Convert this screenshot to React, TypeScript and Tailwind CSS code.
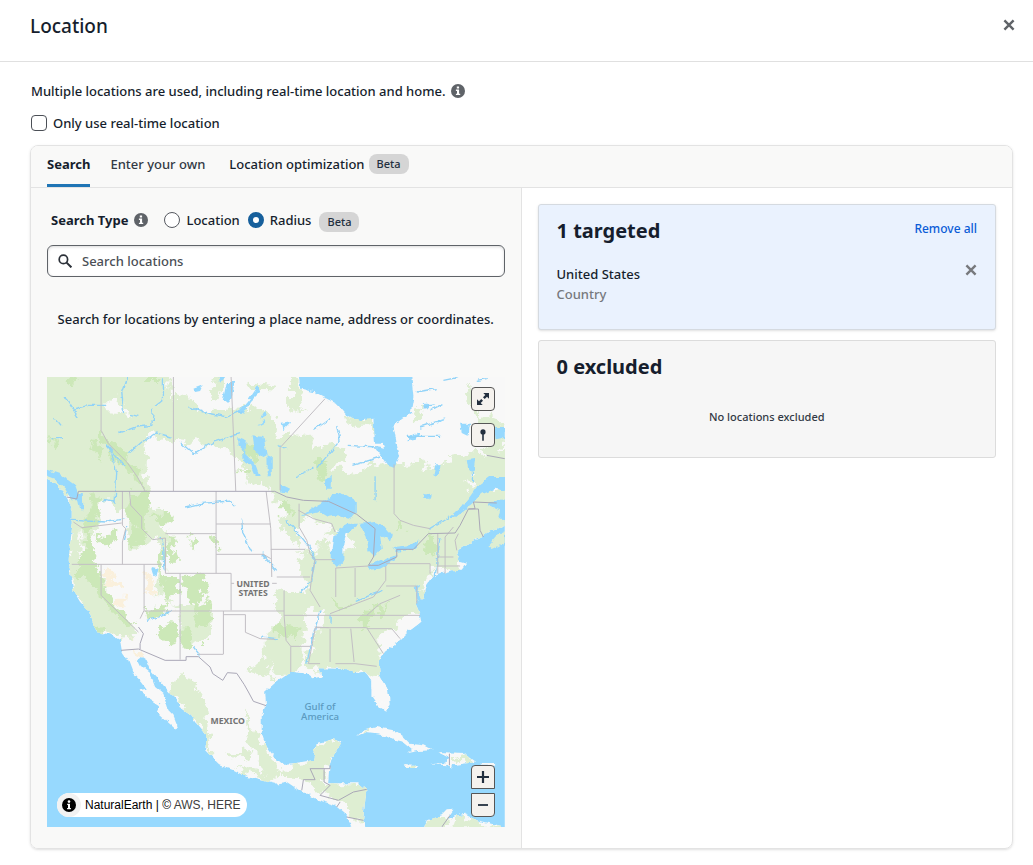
import { useState } from "react";
import type { ReactNode } from "react";

function CloseIcon() {
  return (
    <svg viewBox="0 0 12 12" className="size-3" aria-hidden="true">
      <path d="M1.4 1.4 10.6 10.6M10.6 1.4 1.4 10.6" stroke="currentColor" strokeWidth="2.4" />
    </svg>
  );
}

function InfoIcon({ className }: { className: string }) {
  return (
    <svg viewBox="0 0 14 14" className={className} aria-hidden="true">
      <circle cx="7" cy="7" r="7" fill="currentColor" />
      <path d="M5.8 2.4h2.3v2H5.8zM4.9 5.5h3.2v4.2h1.1v1.4H4.9V9.7H6V6.9H4.9z" fill="#fff" />
    </svg>
  );
}

function Beta() {
  return (
    <span className="inline-flex h-5 items-center rounded-lg bg-[#d5d5d5] px-2 text-[11px] leading-4 font-medium text-[#232f3e]">
      Beta
    </span>
  );
}

function MapButton({ label, shape, children }: { label: string; shape: string; children: ReactNode }) {
  return (
    <button
      type="button"
      aria-label={label}
      className={`flex size-6 items-center justify-center border border-[#565656] bg-[#f5f2ee] text-[#232f3e] ${shape}`}
    >
      {children}
    </button>
  );
}

function NorthAmericaMap() {
  return (
    <svg
      viewBox="0 0 1374 1350"
      preserveAspectRatio="xMidYMid slice"
      className="block h-full w-full"
      role="img"
      aria-label="Map of North America"
    >
      <defs>
        <filter id="coast" x="0" y="0" width="1374" height="1350" filterUnits="userSpaceOnUse">
          <feTurbulence type="fractalNoise" baseFrequency="0.045" numOctaves="3" seed="4" />
          <feDisplacementMap in="SourceGraphic" scale="16" xChannelSelector="R" yChannelSelector="G" />
        </filter>
        <filter id="forest" x="-40" y="-40" width="1460" height="1430" filterUnits="userSpaceOnUse">
          <feTurbulence type="fractalNoise" baseFrequency="0.03" numOctaves="4" seed="9" />
          <feDisplacementMap in="SourceGraphic" scale="56" xChannelSelector="R" yChannelSelector="G" />
        </filter>
        <clipPath id="land">
          <path d={LAND} />
          <path d={ISLANDS} />
        </clipPath>
      </defs>
      <rect width="1374" height="1350" fill="#97d9fe" />

      <g filter="url(#coast)">
        <path d={LAND} fill="#f8f8f8" />
        <path d={ISLANDS} fill="#f8f8f8" />
        <g clipPath="url(#land)">
          <g filter="url(#forest)" fill="#deeed2">
            <path d="M-40-40H365L370 60 395 80 410 110 570 95 650 90 690 150 690 345 640 320 600 300 570 245 530 210 390 195 335 170 290 185 300 250 300 300 320 380 350 410 360 470 350 540 345 675 390 690 480 670 500 720 480 780 410 810 395 790 400 700 350 640 320 660 345 560 335 480 310 500 255 520 235 400 165 370 160 450 130 490 135 560 170 600 190 670 240 720 270 770 250 790 210 780 180 770 130 740 110 700 60 560 70 350 -40 330Z" />
            <path d="M380 50 430 60 450 110 380 120ZM495 0 530 0 515 75 490 70ZM600 10 690 20 690 45 610 35ZM730-10 750-10 770 105 730 100Z" />
            <path d="M684 190 735 175 790 180 800 215 845 205 900 215 905 250 850 270 900 285 970 265 1030 260 1060 265 1120 260 1160 275 1220 235 1310 230 1380 220 1400 300 1310 340 1400 335V480L1290 490 1240 520 1235 580 1160 570 1130 630 1145 690 1070 760 1020 800 1000 900 940 885 760 870 730 890 684 890 650 830 660 770 690 750 684 640 755 655 790 640 740 540 780 530 810 520 850 450 780 420 750 460 760 520 690 430 720 400 684 350Z" />
            <path d="M891 110 985 125 980 165 950 140 895 140ZM1095 130 1115 80 1130 100 1105 140ZM1270 20 1290 100 1374 140 1374 200 1320 250 1320 180 1255 60Z" />
            <path d="M405 875 440 920 470 970 482 1050 500 1130 480 1120 470 1050 440 1030 390 960 375 915ZM590 995 615 1030 640 1085 660 1120 690 1170 684 1220 600 1190 560 1170 660 1190 640 1140 600 1100 610 1060ZM540 1130 610 1125 615 1145 550 1140ZM600 885 640 850 655 830 680 900 620 890Z" />
            <path d="M805 1100 890 1085 860 1160 830 1175 840 1220 940 1215 965 1240 955 1340 930 1330 900 1290 830 1250 790 1220 700 1200 684 1180 770 1165ZM1210 1130 1290 1150 1275 1170 1210 1150ZM1070 1160 1110 1160 1100 1175 1070 1165ZM1140 1320 1210 1315 1200 1350 1140 1350ZM1225 1320 1374 1345 1374 1360 1220 1360ZM940 1060 970 1055 960 1075Z" />
            <path d="M880 460 930 450 965 520 900 530 880 500Z" />
          </g>
          <g filter="url(#forest)" fill="#cce8b8">
            <path d="M155 160 200 190 240 235 280 290 285 340 250 290 200 235 160 190ZM135 195 170 220 165 245 140 215ZM0 180 40 200 35 220 10 205ZM60 0 90 10 80 30 60 20ZM295 0 345 0 340 12 295 12Z" />
            <path d="M130 350 160 360 150 430 125 460 140 510 155 570 180 640 200 670 240 720 270 740 235 745 190 700 140 620 90 600 100 540 115 500 105 450 125 430Z" />
            <path d="M245 350 310 350 320 390 290 420 300 470 285 510 255 510 260 450 240 420ZM310 410 375 410 370 445 330 440ZM360 475 400 480 380 510 395 545 370 545 355 520ZM145 485 210 450 205 480 180 510ZM495 475 520 490 525 520 500 510ZM430 470 450 490 440 510 425 490Z" />
            <path d="M345 500 355 560 350 600 385 600 395 640 360 665 340 670 350 620 335 560ZM405 600 470 590 480 630 465 665 420 680 410 640ZM440 670 500 680 495 730 460 750 450 710ZM330 740 360 730 395 770 385 810 340 780ZM405 750 430 770 430 805 405 800ZM295 695 340 690 370 680 350 710 300 725ZM470 790 480 790 480 815 465 810ZM130 735 180 765 150 770Z" />
            <path d="M810 250 840 265 850 300 820 315 805 290ZM705 380 740 385 730 415 705 410ZM1135 480 1165 475 1165 530 1130 525ZM1050 430 1080 445 1060 460ZM690 735 750 755 745 775 690 770ZM850 670 890 680 920 690 850 690ZM930 720 1010 680 1040 660 1000 700 950 750ZM590 200 640 200 625 260 600 240ZM570 275 610 280 600 290Z" />
          </g>
          <g filter="url(#forest)" fill="#f8f8f8">
            <path d="M190 65 220 55 240 110 185 105ZM155 380 200 375 220 430 160 440ZM100 450 108 540 95 530ZM1250 305 1280 310 1275 340ZM830 480 905 460 920 520 850 520Z" />
            <path d="M790 700 825 690 845 720 800 790 780 860 830 900 760 895 770 830 775 740ZM985 810 1040 740 1080 710 1124 715 1100 780 1010 850ZM960 900 1000 900 1030 960 1015 980 980 960Z" />
          </g>
          <g filter="url(#forest)" fill="#faf0dc">
            <path d="M175 580 205 590 200 610 235 615 225 635 175 625ZM295 580 315 600 320 650 300 650ZM205 665 245 665 235 690 215 685ZM260 820 300 840 290 850 265 840ZM250 780 270 790 255 795Z" />
          </g>
        </g>

        <g fill="#97d9fe">
          <path d="M755-20H1095L1103 60 1095 105 1040 145 1050 200 1060 240 1045 270 1025 265 995 225 985 210 1015 215 1010 200 985 200 980 125 940 130 900 115 870 80 800 45 760 35Z" />
          <path d="M540 15 565 15 555 60 540 80 528 70ZM440 35 468 25 460 42 445 45ZM515 0 535 0 520 20ZM635 25 640 45 610 75 590 110 575 105 605 70ZM655 100 640 125 660 115ZM655 125 635 150 655 140Z" />
          <path d="M617 175 650 180 660 235 650 240 625 225ZM575 180 600 190 595 230 625 260 640 300 625 300 610 265 590 250 590 220 575 205ZM662 235 675 240 675 295 663 295Z" />
          <path d="M700 320 730 335 720 350 700 345ZM835 305 855 300 855 335 835 335ZM705 140 735 135 710 160ZM1240 140 1270 140 1265 175 1245 165ZM1260 250 1285 245 1280 285 1265 280ZM1165 265 1185 265 1170 300 1160 295ZM1130 350 1155 355 1150 365 1130 365ZM1090 175 1120 165 1110 185 1085 190ZM1130 80 1160 80 1140 95ZM1170 130 1200 120 1175 140ZM1374 150 1345 150 1350 190 1374 185Z" />
          <path d="M765 418 800 390 845 365 870 345 900 355 930 375 930 410 905 425 875 415 845 420 820 405Z" />
          <path d="M860 480 880 455 905 440 935 440 900 470 890 500 890 555 870 573 855 555 855 515Z" />
          <path d="M940 440 985 435 1010 445 1035 475 1030 490 1000 475 1005 515 985 540 965 520 960 480Z" />
          <path d="M960 565 1000 550 1050 535 1045 550 1000 575 965 578ZM1040 510 1085 505 1115 490 1110 515 1050 525Z" />
          <path d="M1390 300H1330L1290 330 1265 365 1240 395 1210 420 1225 420 1270 385 1310 350 1345 335 1390 345Z" />
          <path d="M1325 372 1390 370V440L1355 420 1360 400 1320 385Z" />
          <path d="M-10 275 40 292 85 325 95 350 108 350 110 400 100 400 95 370 75 370 55 335 25 305 -10 292Z" />
          <path d="M312 570 335 575 330 598 318 590ZM1104 630 1110 665 1125 680 1115 640 1120 620Z" />
          <path d="M1390 505 1340 520 1330 500 1360 475 1390 465V530Z" />
        </g>
        <path d="M1325 505 1350 475 1374 463V500L1340 518Z" fill="#deeed2" />
      </g>

      <g fill="none" stroke="#91d3f8" strokeWidth="4" filter="url(#coast)">
        <path d="M55 60 95 122M85 95 125 85 180 85M240 0 225 45 228 75 230 105M250 112 275 118M320 95 315 145 270 150 215 170M375 180 330 168 285 195 245 230M10 185 50 185M20 120 40 145M180 205 235 270M195 230 210 285 205 375 170 370M78 430 180 435 235 425M230 490 240 450M350 10 350 65 325 85" />
        <path d="M425 90 470 105 540 120 590 100M400 195 440 230 500 195 580 170M415 390 460 380 550 372 565 390M585 425 588 470 615 520M645 530 690 580M350 510 355 580M375 700 340 720 300 730M440 810 460 835" />
        <path d="M720 430 785 505 805 545 795 610 760 650M900 205 990 210M870 150 880 190 810 275M985 295 985 370M1180 480 1165 600M820 700 800 770 780 860M850 740 850 710M690 785 640 780M800 160 850 125M920 265 1000 240M1145 460 1210 420M1280 285 1280 310M930 670 1010 640M1130 90 1165 80M1110 45 1170 35M1120 150 1180 130" />
        <path d="M1080 178 1180 178M1150 100 1190 80M1190 10 1240 0M1290 10 1320 5M750 300 800 270M690 205 720 215M340 480 350 505" />
      </g>

      <g fill="none" stroke="#c2bfc4" strokeWidth="3" strokeLinejoin="round">
        <path d="M163 0V160L185 200 240 255 272 300 295 342M380 0V342M553 0 567 342M835 65 700 212V340M1042 262V410L1060 430 1100 445 1150 455" />
        <path d="M80 435 105 452 225 438M227 342V445L237 455 227 495V562M75 562H345M163 562V655L275 765M292 562V700L280 725M248 342 252 385 285 420 285 455 318 488 356 483V589M356 470H508M508 342V589M356 589H553V700M400 589V848M508 441H672M508 532H650L672 545M658 342 672 455 675 600M672 517H775M553 619H562M676 619H690M292 702H712M530 702V831M530 713H596V766L640 785 684 787M454 832H530" />
        <path d="M757 380V450L780 490 790 530 805 548H865M805 548 795 600 790 640 820 690M690 600H790M712 640V715M712 715H1120M712 715 718 790 732 808V885M732 808H790M806 750 846 752M806 752 785 860H820M867 573V660M925 573V660M867 573 965 567M1017 567V610L980 660 850 710M1018 560H1150V590M1018 627H1110V680M850 755V855M912 755 922 855M806 752H960L1010 830M960 755 1035 755 1060 785M866 860H925L990 868M755 400 800 425 855 440 865 465M1173 470V590M1195 590V480L1220 450M1230 520 1225 490 1235 470M1173 567H1240M1173 540 1220 540M960 715 1000 680 1060 655" />
      </g>

      <g fill="none" stroke="#aaa8b7" strokeWidth="3" strokeLinejoin="round">
        <path d="M60 360 90 366 95 343H684L720 360 770 370 845 373 930 412 985 455 980 540 965 565 995 565 1050 540 1050 517H1100L1145 470 1225 468 1240 445 1265 396H1295L1300 460 1310 480" />
        <path d="M1265 396 1285 395 1280 375 1350 378M223 820 275 816 355 850H418V839H455L490 870 498 890 528 910 542 887 570 889 592 922 605 945 620 973 658 986M280 816 280 800 290 770 275 750" />
        <path d="M790 1175H850V1165M790 1175 805 1208H770L765 1240M832 1175V1215L850 1225 820 1255 875 1270 920 1245 960 1237M880 1275 870 1290M900 1320 950 1330M1208 1130V1165M1210 1315 1185 1350M1320 235 1374 245" />
      </g>

      <g
        className="font-['Noto_Sans',sans-serif]"
        fontSize="26"
        fontWeight="700"
        textAnchor="middle"
        fill="#747474"
        stroke="#f8f8f8"
        strokeWidth="5"
        paintOrder="stroke"
      >
        <text x="619" y="629">UNITED</text>
        <text x="619" y="656">STATES</text>
        <text x="543" y="1041">MEXICO</text>
      </g>
      <g
        className="font-['Noto_Sans',sans-serif]"
        fontSize="29"
        fontWeight="500"
        textAnchor="middle"
        fill="#5b9ac0"
      >
        <text x="820" y="998">Gulf of</text>
        <text x="820" y="1029">America</text>
      </g>
    </svg>
  );
}

const LAND =
  "M-30-30H1410V430L1324 465 1304 480 1244 510 1229 540 1240 555 1258 560 1245 578 1214 580 1159 600 1139 630 1132 665 1104 674 1119 709 1124 734 1084 764 1059 789 1014 824 996 854 999 894 1024 939 1029 979 1019 1001 999 989 974 954 974 909 954 884 924 889 899 876 819 874 824 899 794 904 774 889 734 884 684 919 655 944 658 986 645 1014 645 1069 660 1109 690 1149 704 1161 744 1159 799 1149 809 1099 859 1087 884 1094 864 1129 849 1159 844 1219 934 1219 959 1239 949 1329 965 1380H924L899 1314 864 1284 814 1269 764 1244 719 1214 684 1220 640 1210 600 1200 560 1180 520 1165 495 1140 475 1120 480 1075 455 1045 430 1010 398 990 395 975 350 925 315 885 300 850 285 840 275 850 285 870 310 890 325 930 350 950 365 1000 380 1015 392 1045 385 1055 330 1005 340 985 310 965 275 940 300 935 285 915 260 890 243 845 225 820 220 790 190 772 150 766 125 700 100 675 80 640 72 600 66 550 70 500 78 440 78 400 62 365 50 345 30 320-30 290Z";

const ISLANDS =
  "M928 1080 950 1060 990 1050 1040 1060 1070 1080 1090 1100 1130 1105 1158 1120 1115 1122 1085 1128 1095 1115 1070 1095 1030 1085 1000 1070 960 1065ZM1175 1125 1250 1128 1285 1155 1220 1165 1215 1178 1205 1165 1150 1162 1195 1158 1205 1140ZM1068 1158 1100 1160 1112 1170 1080 1170ZM1125 1370 1140 1330 1185 1315 1200 1300 1220 1298 1200 1325 1250 1310 1290 1330 1374 1350V1380ZM1308 1158H1345V1166H1308Z";

export default function App() {
  const [realTimeOnly, setRealTimeOnly] = useState(false);
  const [searchType, setSearchType] = useState("radius");
  const radioClass =
    "size-4 appearance-none rounded-full border border-[#565960] bg-white checked:border-[5px] checked:border-[#17609c]";

  return (
    <main className="min-h-screen bg-white pb-4 font-['Noto_Sans',sans-serif] text-[13px] leading-5 font-medium text-[#161e2d]">
      <header className="flex h-[62px] items-start justify-between border-b border-[#e0e0e0] pt-3 pr-[18px] pl-[30px]">
        <h1 className="text-[19px] leading-7 font-medium">Location</h1>
        <button type="button" aria-label="Close" className="mt-[7px] text-[#5f6368]">
          <CloseIcon />
        </button>
      </header>

      <div className="pt-[19px] pr-5 pl-[30px]">
        <div className="pl-px">
          <p className="flex items-center gap-1.5">
            Multiple locations are used, including real-time location and home.
            <InfoIcon className="size-3.5 text-[#5f6368]" />
          </p>
          <label className="mt-3 flex w-fit items-center gap-1.5">
            <input
              type="checkbox"
              checked={realTimeOnly}
              onChange={(e) => setRealTimeOnly(e.target.checked)}
              className="size-4 appearance-none rounded-[4px] border border-[#4b4f56] bg-white checked:bg-[#17609c]"
            />
            Only use real-time location
          </label>
        </div>

        <section className="mt-3 overflow-hidden rounded-lg border border-[#e3e3e3] shadow-sm">
          <div role="tablist" className="flex h-[42px] items-stretch border-b border-[#e3e3e3] bg-[#f9f9f8] px-4">
            <button
              type="button"
              role="tab"
              aria-selected="true"
              className="flex border-b-3 border-[#1f75b5] pt-2 font-bold"
            >
              Search
            </button>
            <button type="button" role="tab" aria-selected="false" className="ml-5 flex pt-2 text-[#333a45]">
              Enter your own
            </button>
            <button type="button" role="tab" aria-selected="false" className="ml-6 flex gap-1 pt-2">
              Location optimization
              <Beta />
            </button>
          </div>

          <div className="grid grid-cols-2">
            <div className="border-r border-[#e3e3e3] bg-[#f9f9f8] px-4 pt-5 pb-[21px]">
              <div role="radiogroup" aria-labelledby="search-type" className="flex items-center px-1">
                <span id="search-type" className="font-bold">
                  Search Type
                </span>
                <InfoIcon className="ml-1.5 size-3.5 text-[#5f6368]" />
                <label className="ml-4 flex items-center gap-1.5">
                  <input
                    type="radio"
                    name="type"
                    checked={searchType === "location"}
                    onChange={() => setSearchType("location")}
                    className={radioClass}
                  />
                  Location
                </label>
                <label className="ml-2 flex items-center gap-1.5">
                  <input
                    type="radio"
                    name="type"
                    checked={searchType === "radius"}
                    onChange={() => setSearchType("radius")}
                    className={radioClass}
                  />
                  Radius
                </label>
                <span className="ml-2 flex pt-1">
                  <Beta />
                </span>
              </div>

              <label className="mt-[13px] flex h-8 items-center gap-2.5 rounded-md border border-[#5f6368] bg-white px-2.5 shadow-[inset_0_1px_3px_#00000026]">
                <svg viewBox="0 0 14 14" className="size-3.5 shrink-0" aria-hidden="true">
                  <circle cx="5.4" cy="5.4" r="4.2" fill="none" stroke="#2b3038" strokeWidth="1.7" />
                  <path d="m8.6 8.6 4.8 4.8" stroke="#2b3038" strokeWidth="2" />
                </svg>
                <input
                  type="text"
                  aria-label="Search locations"
                  placeholder="Search locations"
                  className="min-w-0 flex-1 bg-transparent outline-none placeholder:text-[#4b4f56]"
                />
              </label>

              <p className="mt-8 text-center">Search for locations by entering a place name, address or coordinates.</p>

              <div className="relative mt-12 h-[450px] overflow-hidden">
                <NorthAmericaMap />
                <div className="absolute top-2.5 right-2.5 flex flex-col gap-3">
                  <MapButton label="Full screen" shape="rounded-[4px]">
                    <svg viewBox="0 0 12 12" className="size-3" fill="currentColor" aria-hidden="true">
                      <path d="M6.3 0H12v5.7L10 3.7 7.7 6 6 4.3 8.3 2zM5.7 12H0V6.3l2 2L4.3 6 6 7.7 3.7 10z" />
                    </svg>
                  </MapButton>
                  <MapButton label="Drop a pin" shape="rounded-[4px]">
                    <svg viewBox="0 0 12 12" className="size-3" fill="currentColor" aria-hidden="true">
                      <circle cx="6" cy="2.9" r="2.6" />
                      <path d="M5.2 4h1.6v7.8H5.2z" />
                    </svg>
                  </MapButton>
                </div>
                <div className="absolute right-2.5 bottom-2.5 flex flex-col gap-1">
                  <MapButton label="Zoom in" shape="rounded-t-[4px]">
                    <svg viewBox="0 0 12 12" className="size-3" aria-hidden="true">
                      <path d="M6 0v12M0 6h12" stroke="currentColor" strokeWidth="2.2" />
                    </svg>
                  </MapButton>
                  <MapButton label="Zoom out" shape="rounded-b-[4px]">
                    <svg viewBox="0 0 12 12" className="size-3" aria-hidden="true">
                      <path d="M1 6h10" stroke="currentColor" strokeWidth="1.8" />
                    </svg>
                  </MapButton>
                </div>
                <div className="absolute bottom-2.5 left-2.5 flex h-6 items-center rounded-full bg-white pr-1.5 font-['Liberation_Sans',sans-serif] text-xs font-normal text-black">
                  <span className="flex size-6 items-center justify-center rounded-full bg-[#f2f2f2]">
                    <svg viewBox="0 0 14 14" className="size-3.5" aria-hidden="true">
                      <circle cx="7" cy="7" r="7" />
                      <circle cx="7" cy="3.6" r="1.3" fill="#fff" />
                      <path d="M5.2 5.8H8v4.3h.9v1.2H5.1v-1.2H6V7h-.8z" fill="#fff" />
                    </svg>
                  </span>
                  <span className="ml-1 whitespace-nowrap">
                    NaturalEarth | © <span className="text-[#404040]">AWS, HERE</span>
                  </span>
                </div>
              </div>
            </div>

            <div className="flex flex-col gap-2.5 p-4">
              <section className="h-[126px] rounded-[3px] border border-[#d5dae0] bg-[#eaf2fe] px-[18px] pt-3 shadow-sm">
                <div className="flex items-start justify-between">
                  <h2 className="text-xl leading-7 font-bold">1 targeted</h2>
                  <button type="button" className="pt-0.5 text-xs leading-5 text-[#0a5cd7]">
                    Remove all
                  </button>
                </div>
                <div className="mt-[19px] flex items-start justify-between">
                  <div>
                    <p>United States</p>
                    <p className="text-[#77797d]">Country</p>
                  </div>
                  <button type="button" aria-label="Remove United States" className="text-[#77797d]">
                    <CloseIcon />
                  </button>
                </div>
              </section>
              <section className="h-[118px] rounded-[3px] border border-[#dcdcdc] bg-[#f6f6f6] px-[18px] pt-3">
                <h2 className="text-xl leading-7 font-bold">0 excluded</h2>
                <p className="mt-7 text-center text-[11px] leading-4 text-[#333a45]">No locations excluded</p>
              </section>
            </div>
          </div>
        </section>
      </div>
    </main>
  );
}
